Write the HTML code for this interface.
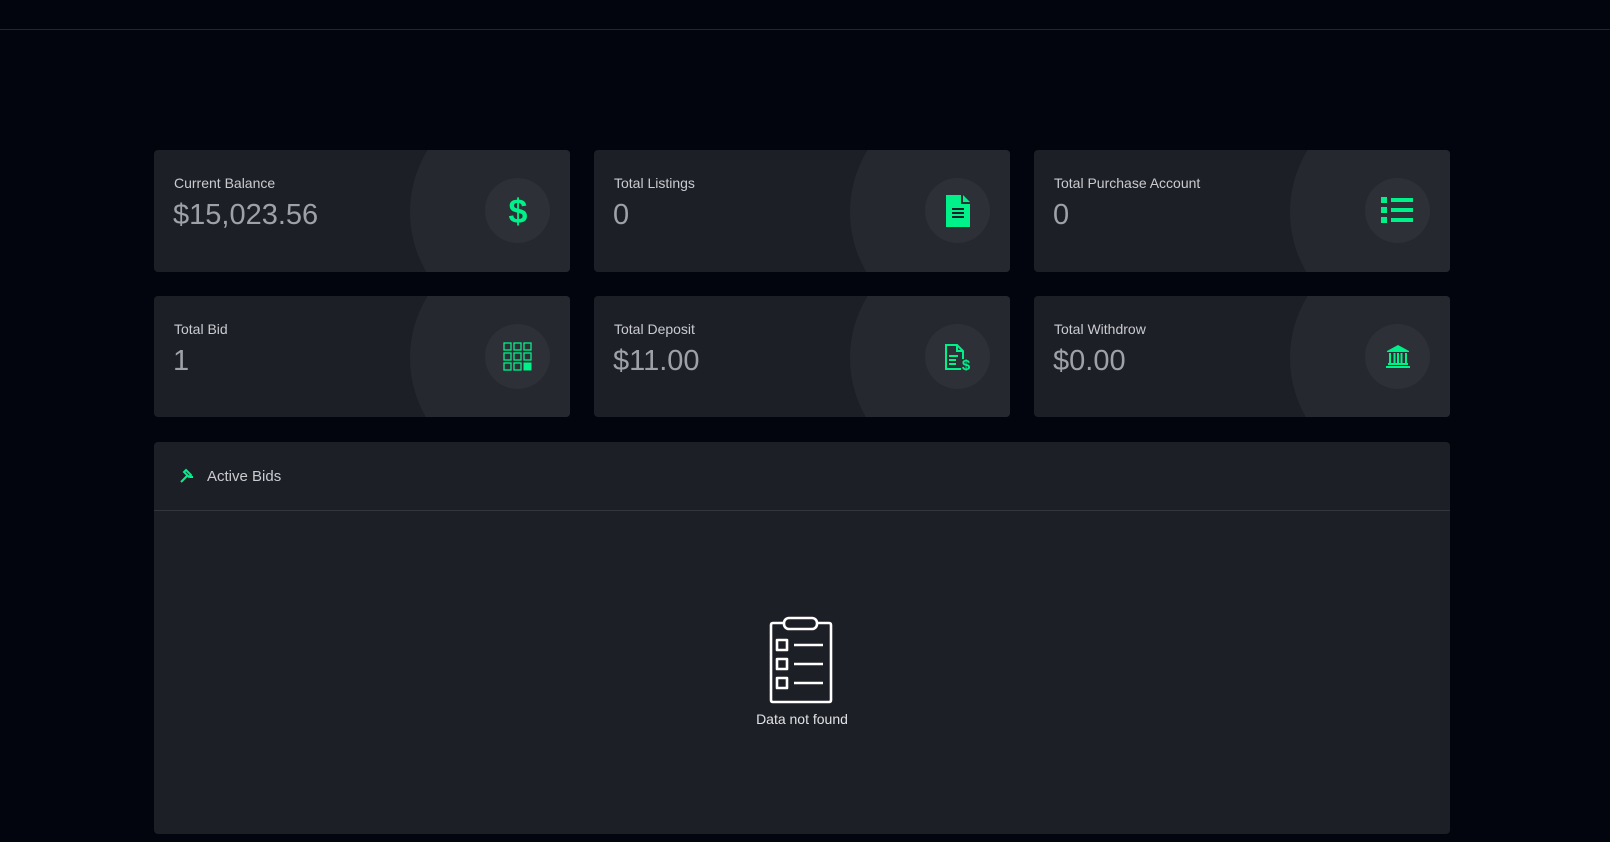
<!DOCTYPE html>
<html><head><meta charset="utf-8"><style>
*{margin:0;padding:0;box-sizing:border-box}
body{width:1610px;height:842px;background:#02050e;font-family:"Liberation Sans",sans-serif;position:relative;overflow:hidden}
.top{position:absolute;left:0;top:29px;width:1610px;height:1px;background:#23252c}
.card{position:absolute;width:416px;background:#1d1f26;border-radius:4px;overflow:hidden}
.card .big{position:absolute;left:256px;top:-56px;width:236px;height:236px;border-radius:50%;background:#25282f}
.card .lab{position:absolute;left:20px;top:25px;font-size:14px;color:#c9cbd0}
.card .val{position:absolute;left:19px;top:49px;font-size:29px;color:#9ea1a8}
.card .ic{position:absolute;left:331px;top:28px;width:65px;height:65px;border-radius:50%;background:#2e3037;display:flex;align-items:center;justify-content:center}
.panel{position:absolute;left:154px;top:442px;width:1296px;height:392px;background:#1d1f26;border-radius:4px}
.ph{height:69px;border-bottom:1px solid #34363d;display:flex;align-items:center;padding-left:25px;color:#c9cbd0;font-size:15px}
</style></head><body>
<div class="top"></div>

<div class="card" style="left:154px;top:150px;height:122px"><div class="big"></div><div class="lab">Current Balance</div><div class="val">$15,023.56</div>
<div class="ic"><svg width="24" height="34" viewBox="0 0 24 34"><text x="12" y="29" text-anchor="middle" font-family="Liberation Sans" font-weight="bold" font-size="34" fill="#00f08a">$</text></svg></div></div>

<div class="card" style="left:594px;top:150px;height:122px"><div class="big"></div><div class="lab">Total Listings</div><div class="val">0</div>
<div class="ic"><svg width="24" height="32" viewBox="0 0 24 32"><path d="M0 0H15V9H24V32H0Z" fill="#00f08a"/><path d="M17 0L24 7H17Z" fill="#00f08a"/><path d="M6 14H18M6 18H18M6 22H18" stroke="#1d1f26" stroke-width="2"/></svg></div></div>

<div class="card" style="left:1034px;top:150px;height:122px"><div class="big"></div><div class="lab">Total Purchase Account</div><div class="val">0</div>
<div class="ic"><svg width="34" height="27" viewBox="0 0 34 27"><g fill="#00f08a"><rect x="0" y="0" width="6" height="6"/><rect x="0" y="10" width="6" height="6"/><rect x="0" y="20" width="6" height="6"/><rect x="10" y="1" width="22" height="4"/><rect x="10" y="11" width="22" height="4"/><rect x="10" y="21" width="22" height="4"/></g></svg></div></div>

<div class="card" style="left:154px;top:296px;height:121px"><div class="big"></div><div class="lab">Total Bid</div><div class="val">1</div>
<div class="ic"><svg width="30" height="30" viewBox="0 0 30 30"><g fill="none" stroke="#00f08a" stroke-width="1.3"><rect x="1" y="1" width="7" height="7"/><rect x="11" y="1" width="7" height="7"/><rect x="21" y="1" width="7" height="7"/><rect x="1" y="11" width="7" height="7"/><rect x="11" y="11" width="7" height="7"/><rect x="21" y="11" width="7" height="7"/><rect x="1" y="21" width="7" height="7"/><rect x="11" y="21" width="7" height="7"/></g><rect x="20.5" y="20.5" width="8" height="8" fill="#00f08a"/></svg></div></div>

<div class="card" style="left:594px;top:296px;height:121px"><div class="big"></div><div class="lab">Total Deposit</div><div class="val">$11.00</div>
<div class="ic"><svg width="28" height="28" viewBox="0 0 28 28"><g fill="none" stroke="#00f08a" stroke-width="2"><path d="M19 16V8L13 2H2V26H17"/><path d="M13 2V8H19"/><path d="M5 13H14M5 17H12M5 21H12"/></g><text x="22" y="27" text-anchor="middle" font-family="Liberation Sans" font-weight="bold" font-size="15" fill="#00f08a">$</text></svg></div></div>

<div class="card" style="left:1034px;top:296px;height:121px"><div class="big"></div><div class="lab">Total Withdrow</div><div class="val">$0.00</div>
<div class="ic"><svg width="24" height="24" viewBox="0 0 24 24"><g fill="#00f08a"><path d="M12 0L23 6V7H1V6Z"/><rect x="3" y="8" width="2" height="10"/><rect x="7.5" y="8" width="2" height="10"/><rect x="11" y="8" width="2" height="10"/><rect x="14.5" y="8" width="2" height="10"/><rect x="19" y="8" width="2" height="10"/><rect x="2" y="18" width="20" height="2"/><rect x="0" y="21" width="24" height="2"/></g></svg></div></div>

<div class="panel">
<div class="ph"><svg width="16" height="16" viewBox="0 0 16 16" style="margin-right:12px"><g fill="none" stroke="#00f08a" stroke-width="2"><path d="M7 2L12 7L10 9L5 4Z"/><path d="M8.5 7.5L2 14"/><path d="M11 9L14 9"/></g></svg>Active Bids</div>
<svg style="position:absolute;left:614px;top:174px" width="66" height="88" viewBox="0 0 66 88"><g fill="none" stroke="#fff" stroke-width="2.6" stroke-linejoin="round"><path d="M16 7H5Q3 7 3 9V84Q3 86 5 86H61Q63 86 63 84V9Q63 7 61 7H49"/><rect x="16" y="2" width="33" height="11" rx="5"/><rect x="9" y="24" width="10" height="10"/><rect x="9" y="43" width="10" height="10"/><rect x="9" y="62" width="10" height="10"/><path d="M26 29H55M26 48H55M26 67H55"/></g></svg>
<div style="position:absolute;left:0;width:1296px;top:269px;text-align:center;color:#e0e2e6;font-size:14px">Data not found</div>
</div>
</body></html>
